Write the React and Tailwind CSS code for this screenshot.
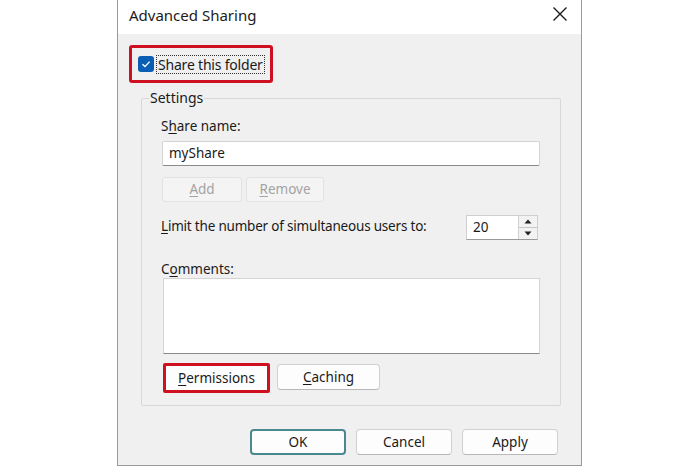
import React from "react";

const font = { fontFamily: '"Noto Sans", "Segoe UI", sans-serif' };

function Btn({ children, className = "" }) {
  return (
    <div
      className={
        "flex items-center justify-center rounded-[4px] border border-[#d0d0d0] border-b-[#b8b8b8] bg-[#fdfdfd] text-[13.5px] text-[#1a1a1a] " +
        className
      }
    >
      {children}
    </div>
  );
}

export default function App() {
  return (
    <div className="w-[700px] h-[467px] bg-white pl-[117px] overflow-hidden" style={font}>
      <div className="w-[465px] h-[466px] border-x border-b border-[#9a9a9a] flex flex-col">
        {/* Title bar */}
        <div className="h-[34px] bg-white flex items-center justify-between pl-[11px] pr-[13px]">
          <span className="text-[15px] text-[#1b1b1b] leading-none -mt-[4px]">Advanced Sharing</span>
          <svg width="16" height="16" viewBox="0 0 16 16" className="-mt-[6px]">
            <path d="M1.5 1.5 L14.5 14.5 M14.5 1.5 L1.5 14.5" stroke="#1a1a1a" strokeWidth="1.4" fill="none" />
          </svg>
        </div>
        {/* Body */}
        <div className="flex-1 bg-[#f0f0f0] flex flex-col">
          <div className="mt-[11px] ml-[11px] w-[144px] h-[38px] border-[3px] border-[#cf1020] rounded-[3px] flex items-center pl-[6px] gap-[3px]">
            <div className="w-[16px] h-[16px] rounded-[3px] bg-[#0a5fb4] flex items-center justify-center">
              <svg width="12" height="12" viewBox="0 0 12 12">
                <path d="M2.5 6.2 L5 8.6 L9.6 3.6" stroke="white" strokeWidth="1.4" fill="none" />
              </svg>
            </div>
            <span className="text-[14px] leading-[17px] text-[#1a1a1a] outline outline-1 outline-dotted outline-[#333] px-[1px] tracking-[-0.2px]">
              Share this folder
            </span>
          </div>

          <fieldset className="mt-[6px] ml-[23px] w-[420px] border border-[#d8d8d8] rounded-[2px] pl-[20px] pr-[20px] pb-[12px]">
            <legend className="-ml-[13px] px-[1px] text-[14px] leading-[18px] text-[#1a1a1a]">Settings</legend>
            <div className="mt-[10px] h-[18px] text-[13.5px] leading-[18px] text-[#1a1a1a] -ml-[1px]">
              S<u className="underline-offset-2">h</u>are name:
            </div>
            <div className="mt-[6px] h-[25px] bg-white border border-[#d4d4d4] border-b-[#8a8a8a] rounded-[2px] flex items-center pl-[6px] text-[13.5px] text-[#1a1a1a]">
              myShare
            </div>
            <div className="mt-[11px] flex gap-[4px]">
              <div className="w-[80px] h-[25px] border border-[#e2e2e2] bg-[#f4f4f4] rounded-[3px] flex items-center justify-center text-[13.5px] text-[#a3a3a3]">
                <span><u className="underline-offset-2">A</u>dd</span>
              </div>
              <div className="w-[78px] h-[25px] border border-[#e2e2e2] bg-[#f4f4f4] rounded-[3px] flex items-center justify-center text-[13.5px] text-[#a3a3a3]">
                <span><u className="underline-offset-2">R</u>emove</span>
              </div>
            </div>
            <div className="mt-[13px] h-[25px] flex items-center justify-between">
              <span className="text-[13.5px] text-[#1a1a1a] -ml-[1px] -mt-[2px] tracking-[-0.2px]">
                <u className="underline-offset-2">L</u>imit the number of simultaneous users to:
              </span>
              <div className="mr-[2px] w-[72px] h-[25px] bg-white border border-[#cfcfcf] border-b-[#9a9a9a] flex">
                <div className="flex-1 flex items-center pl-[6px] text-[13.5px] text-[#1a1a1a]">20</div>
                <div className="w-[19px] flex flex-col border-l border-[#d0d0d0]">
                  <div className="flex-1 bg-[#f2f2f2] border-b border-[#c8c8c8] flex items-center justify-center">
                    <svg width="8" height="5" viewBox="0 0 8 5"><path d="M4 0.5 L7.5 4.5 L0.5 4.5 Z" fill="#222" /></svg>
                  </div>
                  <div className="flex-1 bg-[#f2f2f2] flex items-center justify-center">
                    <svg width="8" height="5" viewBox="0 0 8 5"><path d="M0.5 0.5 L7.5 0.5 L4 4.5 Z" fill="#222" /></svg>
                  </div>
                </div>
              </div>
            </div>
            <div className="mt-[20px] h-[18px] text-[13.5px] leading-[18px] text-[#1a1a1a] -ml-[1px]">
              C<u className="underline-offset-2">o</u>mments:
            </div>
            <div className="ml-[1px] h-[76px] bg-white border border-[#d4d4d4] border-b-[#8a8a8a]" />
            <div className="mt-[9px] ml-[1px] flex items-start gap-[7px]">
              <div className="w-[107px] h-[30px] border-[3px] border-[#cf1020] rounded-[2px] bg-[#fdfdfd] flex items-center justify-center text-[13.5px] text-[#1a1a1a]">
                <span><u className="underline-offset-2">P</u>ermissions</span>
              </div>
              <Btn className="w-[103px] h-[26px] mt-[1px]">
                <span><u className="underline-offset-2">C</u>aching</span>
              </Btn>
            </div>
          </fieldset>

          <div className="mt-[23px] flex justify-end gap-[10px] pr-[23px]">
            <div className="w-[96px] h-[26px] rounded-[4px] border-2 border-[#4a8890] bg-[#fdfdfd] flex items-center justify-center text-[13.5px] text-[#1a1a1a]">
              OK
            </div>
            <Btn className="w-[96px] h-[26px]">Cancel</Btn>
            <Btn className="w-[96px] h-[26px]">Apply</Btn>
          </div>
        </div>
      </div>
    </div>
  );
}
